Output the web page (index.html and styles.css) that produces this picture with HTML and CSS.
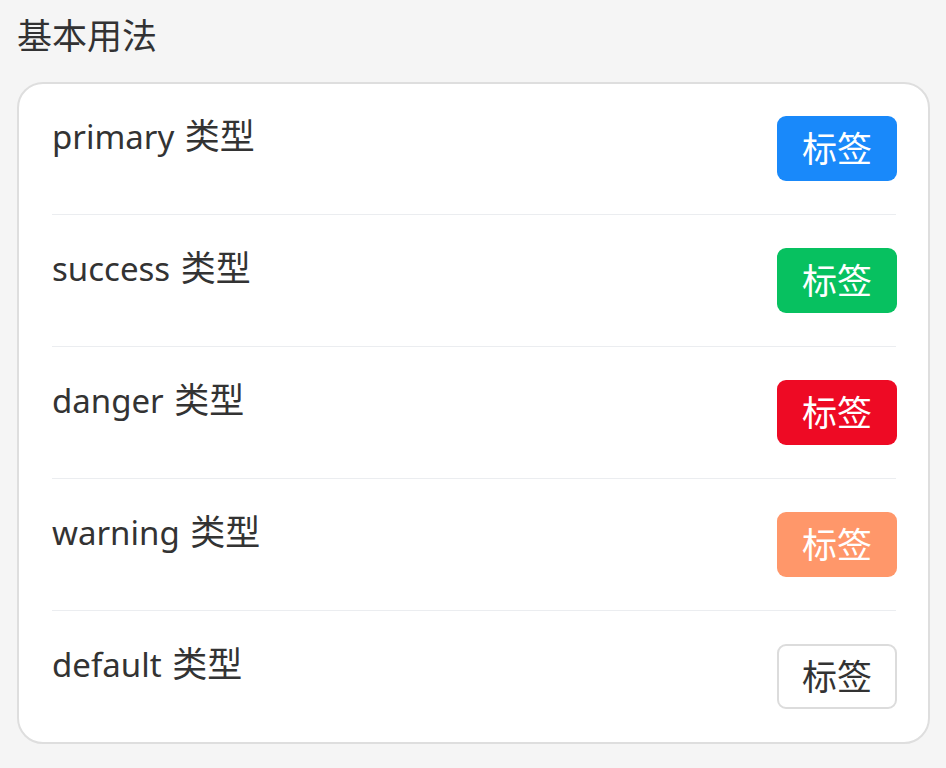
FILE: index.html
```html
<!DOCTYPE html>
<html lang="zh">
<head>
<meta charset="utf-8">
<link rel="stylesheet" href="styles.css">
</head>
<body>
<div class="page">
  <h2 class="title">基本用法</h2>
  <div class="card">
    <div class="row">
      <span class="label">primary <span class="cjk">类型</span></span>
      <span class="tag tag-primary">标签</span>
    </div>
    <div class="row">
      <span class="label">success <span class="cjk">类型</span></span>
      <span class="tag tag-success">标签</span>
    </div>
    <div class="row">
      <span class="label">danger <span class="cjk">类型</span></span>
      <span class="tag tag-danger">标签</span>
    </div>
    <div class="row">
      <span class="label">warning <span class="cjk">类型</span></span>
      <span class="tag tag-warning">标签</span>
    </div>
    <div class="row">
      <span class="label">default <span class="cjk">类型</span></span>
      <span class="tag tag-default">标签</span>
    </div>
  </div>
</div>
</body>
</html>
```

FILE: styles.css
```css
html, body {
  margin: 0;
  padding: 0;
  background: #f5f5f5;
  font-family: "Noto Sans", "Noto Sans CJK SC", sans-serif;
  color: #323233;
}
.page {
  padding: 10px 16px 0 17px;
}
.title {
  margin: 0;
  font-size: 35px;
  font-weight: 400;
  line-height: 52px;
  color: #323233;
}
.card {
  margin-top: 20px;
  background: #fff;
  border: 2px solid #dedede;
  border-radius: 26px;
  padding: 0 32px 0 33px;
}
.row {
  display: flex;
  justify-content: space-between;
  align-items: flex-start;
  padding: 32px 0 33px;
  border-bottom: 1px solid #ebedf0;
}
.row + .row {
  padding-top: 33px;
}
.row:last-child {
  border-bottom: none;
}
.label {
  font-size: 33px;
  line-height: 40px;
  color: #333;
}
.cjk {
  font-size: 35px;
  margin-left: 2px;
}
.tag {
  box-sizing: border-box;
  display: flex;
  align-items: center;
  justify-content: center;
  width: 120px;
  height: 65px;
  padding-bottom: 4px;
  border-radius: 9px;
  font-size: 35px;
  color: #fff;
  margin-right: -1px;
}
.tag-primary { background: #1989fa; }
.tag-success { background: #07c160; }
.tag-danger { background: #ee0a24; }
.tag-warning { background: #ff976a; }
.tag-default {
  background: #fff;
  border: 2px solid #dcdcdc;
  color: #333;
}
```
